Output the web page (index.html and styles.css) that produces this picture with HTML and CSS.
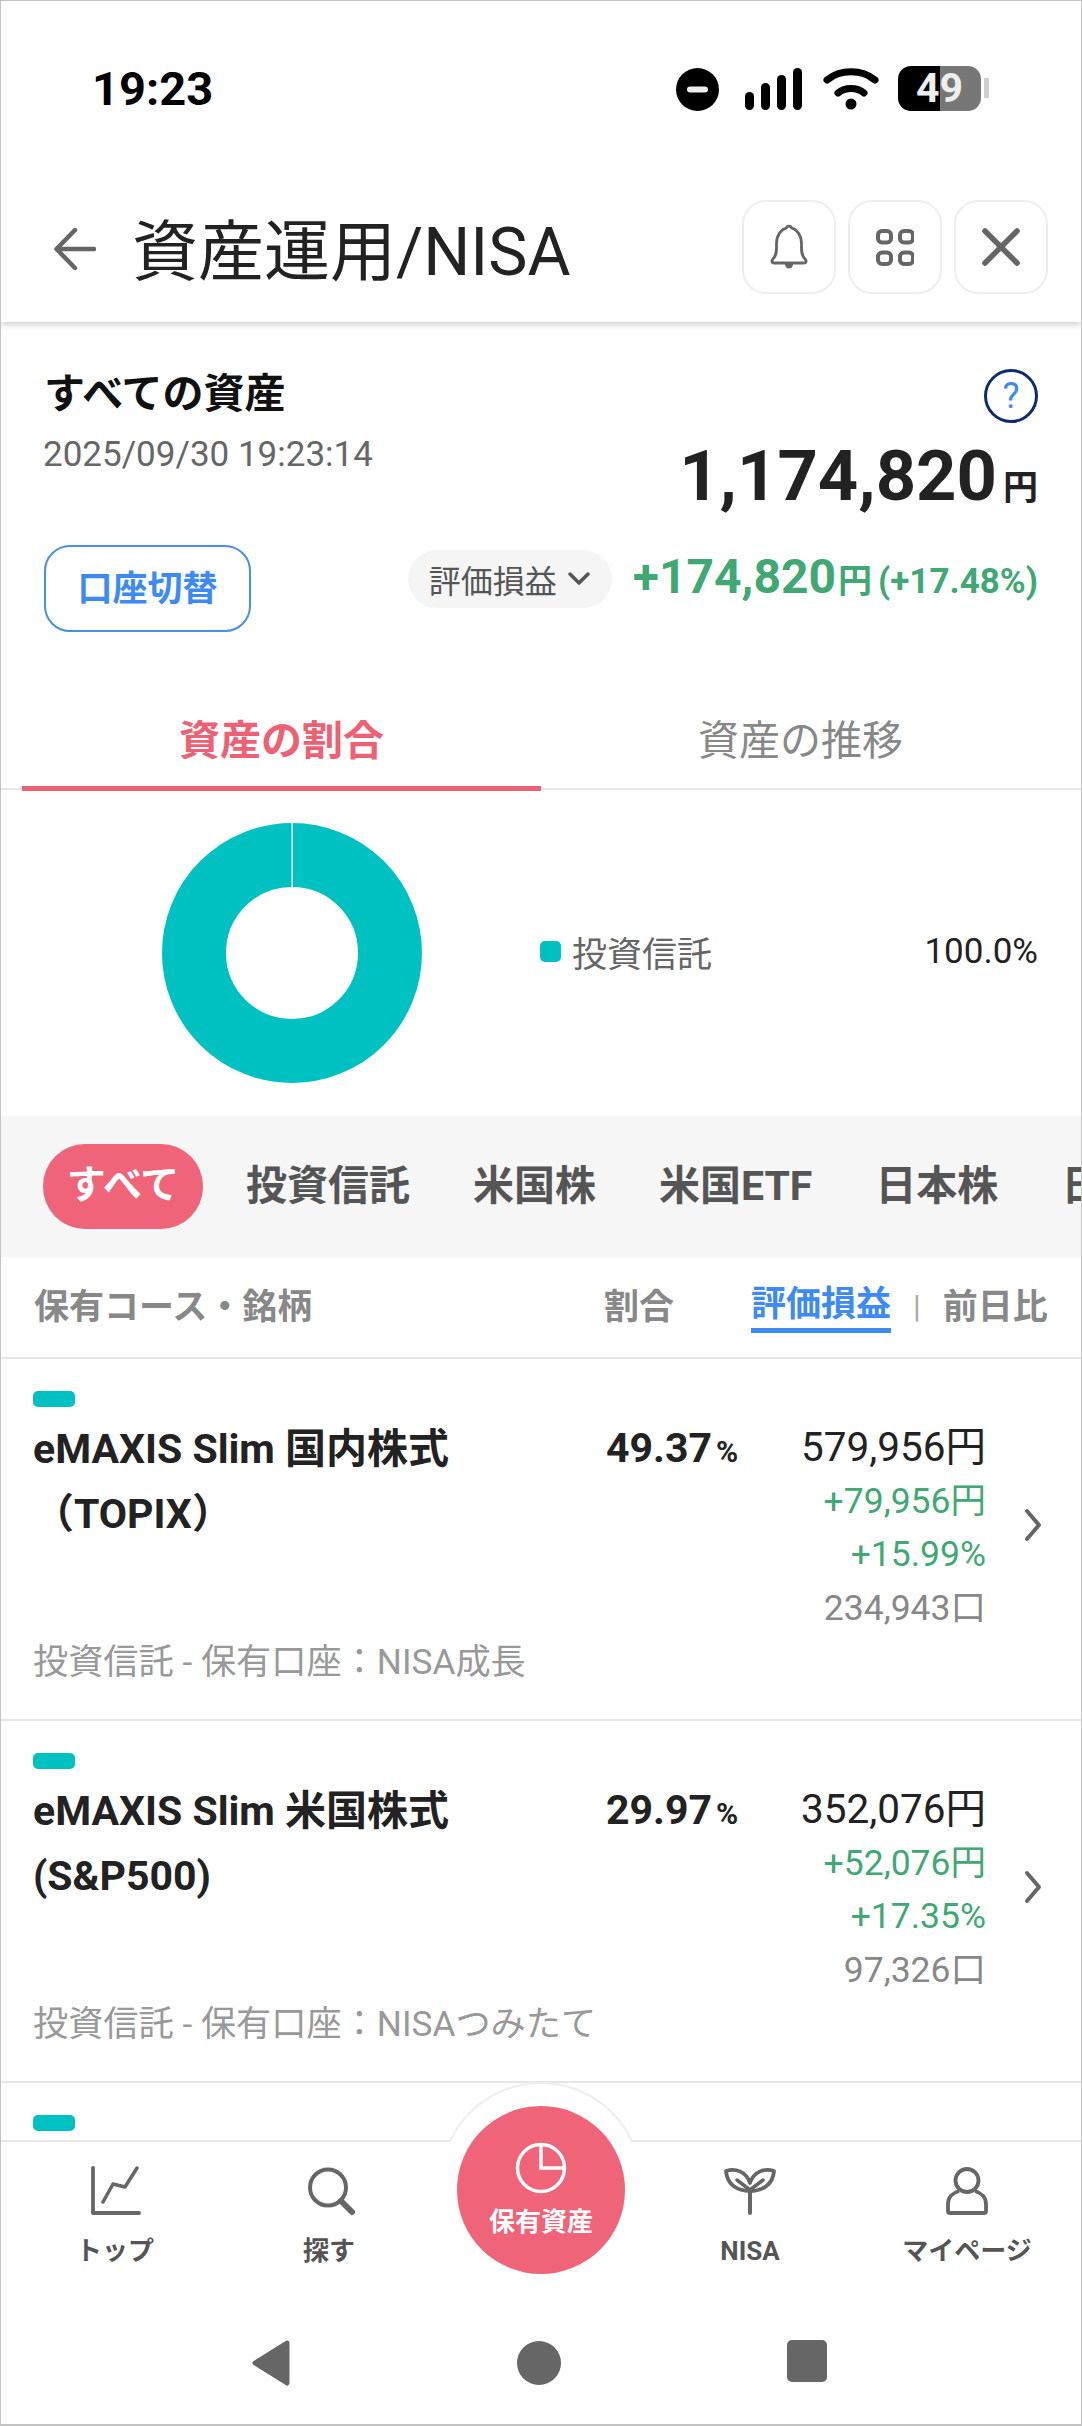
FILE: index.html
```html
<!DOCTYPE html>
<html lang="ja">
<head>
    <meta charset="UTF-8">
    <meta name="viewport" content="width=device-width, initial-scale=1.0">
    <title>資産運用/NISA</title>
    <link rel="stylesheet" href="styles.css">
</head>
<body>
    <div class="phone">
        <div class="status-bar">
            <span class="clock">19:23</span>
            <div class="status-icons">
                <svg class="dnd" width="43" height="43" viewBox="0 0 43 43"><circle cx="21.5" cy="21.5" r="21.5" fill="#000"/><rect x="11" y="18.5" width="21" height="6" rx="3" fill="#eee"/></svg>
                <svg class="signal" width="58" height="42" viewBox="0 0 58 42"><rect x="0" y="24" width="9" height="18" rx="4.5"/><rect x="16" y="15" width="9" height="27" rx="4.5"/><rect x="32" y="7" width="9" height="35" rx="4.5"/><rect x="48" y="0" width="9" height="42" rx="4.5"/></svg>
                <svg class="wifi" width="56" height="42" viewBox="0 0 56 42"><path d="M4 12C17 1 39 1 52 12M15 25C22 19 34 19 41 25" fill="none" stroke="#000" stroke-width="7" stroke-linecap="round"/><circle cx="28" cy="36" r="5.500"/></svg>
                <div class="battery"><span>49</span></div>
                <div class="battery-nub"></div>
            </div>
        </div>

        <header class="app-header">
            <svg class="back" width="42" height="42" viewBox="0 0 42 42"><path d="M40 21H3M21 2L2.5 21L21 40" fill="none" stroke="#666" stroke-width="4.5" stroke-linecap="round" stroke-linejoin="round"/></svg>
            <h1>資産運用/NISA</h1>
            <div class="header-buttons">
                <div class="icon-button">
                    <svg width="40" height="46" viewBox="0 0 40 46"><path d="M4 35C8 31 7.500 26 7.500 20C7.500 11 12 5.500 17.500 4C18 1.500 22 1.500 22.500 4C28 5.500 32.500 11 32.500 20C32.500 26 32 31 36 35C38 37 37 39 35 39H5C3 39 2 37 4 35Z" fill="none" stroke="#666" stroke-width="2.800" stroke-linejoin="round"/><path d="M16 40H24C24 46 16 46 16 40Z" fill="#666"/></svg>
                </div>
                <div class="icon-button">
                    <svg width="38" height="37" viewBox="0 0 38 37"><g fill="none" stroke="#666" stroke-width="4"><rect x="2" y="2" width="13" height="11.500" rx="4"/><rect x="24" y="2" width="13" height="11.500" rx="4"/><rect x="2" y="23.500" width="13" height="11.500" rx="4"/><rect x="24" y="23.500" width="13" height="11.500" rx="4"/></g></svg>
                </div>
                <div class="icon-button">
                    <svg width="38" height="38" viewBox="0 0 38 38"><path d="M3 3L35 35M35 3L3 35" stroke="#666" stroke-width="5.500" stroke-linecap="round"/></svg>
                </div>
            </div>
        </header>

        <main class="content">
            <section class="summary">
                <div class="summary-top">
                    <div>
                        <div class="summary-title">すべての資産</div>
                        <div class="summary-date">2025/09/30 19:23:14</div>
                    </div>
                    <div class="summary-right">
                        <div class="help">?</div>
                        <div class="total">1,174,820<span>円</span></div>
                    </div>
                </div>
                <div class="summary-bottom">
                    <button class="switch">口座切替</button>
                    <div class="gain-box">
                        <div class="gain-select">評価損益
                            <svg width="24" height="15" viewBox="0 0 24 15"><path d="M3 3L12 12L21 3" fill="none" stroke="#555" stroke-width="3.500" stroke-linecap="round" stroke-linejoin="round"/></svg>
                        </div>
                        <div class="gain">+174,820<span class="yen">円</span><span class="rate">(+17.48%)</span></div>
                    </div>
                </div>
            </section>

            <nav class="tabs">
                <div class="tab active">資産の割合</div>
                <div class="tab">資産の推移</div>
            </nav>

            <section class="chart">
                <svg class="donut" width="260" height="260" viewBox="0 0 260 260"><circle cx="130" cy="130" r="98" fill="none" stroke="#00c1c1" stroke-width="64"/><rect x="129.500" y="0" width="1.500" height="64" fill="#fff"/></svg>
                <div class="legend">
                    <span class="legend-mark"></span>
                    <span class="legend-name">投資信託</span>
                    <span class="legend-value">100.0%</span>
                </div>
            </section>

            <div class="filters">
                <span class="pill">すべて</span>
                <span class="filter">投資信託</span>
                <span class="filter">米国株</span>
                <span class="filter">米国ETF</span>
                <span class="filter">日本株</span>
                <span class="filter">日本ETF</span>
            </div>

            <div class="list-head">
                <span class="head-name">保有コース・銘柄</span>
                <span class="head-rate">割合</span>
                <span class="head-gain">評価損益</span>
                <span class="head-sep">|</span>
                <span class="head-day">前日比</span>
            </div>

            <div class="row">
                <div class="tag"></div>
                <div class="row-main">
                    <div class="fund">eMAXIS Slim 国内株式<br>（TOPIX）</div>
                    <div class="share">49.37<span>%</span></div>
                    <div class="amounts">
                        <div class="amount">579,956円</div>
                        <div class="up">+79,956円</div>
                        <div class="up">+15.99%</div>
                        <div class="units">234,943口</div>
                    </div>
                </div>
                <div class="account">投資信託 - 保有口座：NISA成長</div>
                <svg class="chevron" width="20" height="34" viewBox="0 0 20 34"><path d="M4 3L16 17L4 31" fill="none" stroke="#666" stroke-width="4" stroke-linecap="round" stroke-linejoin="round"/></svg>
            </div>

            <div class="row">
                <div class="tag"></div>
                <div class="row-main">
                    <div class="fund">eMAXIS Slim 米国株式<br>(S&amp;P500)</div>
                    <div class="share">29.97<span>%</span></div>
                    <div class="amounts">
                        <div class="amount">352,076円</div>
                        <div class="up">+52,076円</div>
                        <div class="up">+17.35%</div>
                        <div class="units">97,326口</div>
                    </div>
                </div>
                <div class="account">投資信託 - 保有口座：NISAつみたて</div>
                <svg class="chevron" width="20" height="34" viewBox="0 0 20 34"><path d="M4 3L16 17L4 31" fill="none" stroke="#666" stroke-width="4" stroke-linecap="round" stroke-linejoin="round"/></svg>
            </div>

            <div class="row">
                <div class="tag"></div>
            </div>
        </main>

        <footer class="tabbar">
            <div class="tabbar-arc"></div>
            <div class="tabbar-item item-top">
                <svg width="52" height="50" viewBox="0 0 52 50"><path d="M4 2V47H50" fill="none" stroke="#666" stroke-width="3.800" stroke-linecap="round" stroke-linejoin="round"/><path d="M14 36L24 18L36 21L48 2" fill="none" stroke="#666" stroke-width="3.500" stroke-linecap="round" stroke-linejoin="round"/></svg>
                <span>トップ</span>
            </div>
            <div class="tabbar-item item-search">
                <svg width="52" height="50" viewBox="0 0 52 50"><circle cx="25" cy="21.500" r="18" fill="none" stroke="#666" stroke-width="4"/><path d="M38 35L49 46" stroke="#666" stroke-width="6" stroke-linecap="round"/></svg>
                <span>探す</span>
            </div>
            <div class="tabbar-item item-nisa">
                <svg width="54" height="50" viewBox="0 0 54 50"><path d="M27 25V47" stroke="#666" stroke-width="4" stroke-linecap="round"/><path d="M27 25C15 25 4 19 3 5C12 2 23 5 27 17C31 5 42 2 51 5C50 19 39 25 27 25Z" fill="none" stroke="#666" stroke-width="3.800" stroke-linejoin="round"/><path d="M14 14L27 24L40 14" fill="none" stroke="#666" stroke-width="3.500" stroke-linecap="round" stroke-linejoin="round"/></svg>
                <span>NISA</span>
            </div>
            <div class="tabbar-item item-mypage">
                <svg width="46" height="50" viewBox="0 0 46 50"><circle cx="23" cy="14.500" r="11.500" fill="none" stroke="#666" stroke-width="3.800"/><path d="M15 25C8 27 4 32 4 38V45Q4 47 6 47H40Q42 47 42 45V38C42 32 38 27 31 25" fill="none" stroke="#666" stroke-width="3.800" stroke-linejoin="round"/></svg>
                <span>マイページ</span>
            </div>
            <div class="tabbar-main">
                <svg width="52" height="52" viewBox="0 0 52 52"><circle cx="26" cy="26" r="23.500" fill="none" stroke="#fff" stroke-width="3.500"/><path d="M26 2.500V26H49.500" fill="none" stroke="#fff" stroke-width="3.500"/></svg>
                <span>保有資産</span>
            </div>
        </footer>

        <div class="android-nav">
            <svg width="40" height="46" viewBox="0 0 40 46"><path d="M36 3L4 23L36 43Z" fill="#666" stroke="#666" stroke-width="5" stroke-linejoin="round"/></svg>
            <svg width="44" height="46" viewBox="0 0 44 46"><circle cx="22" cy="23" r="22" fill="#666"/></svg>
            <svg width="40" height="42" viewBox="0 0 40 42"><rect width="40" height="42" rx="5" fill="#666"/></svg>
        </div>
    </div>
</body>
</html>
```

FILE: styles.css
```css
* {
    box-sizing: border-box;
}
body {
    margin: 0;
    font-family: Roboto, "Noto Sans CJK JP", sans-serif;
    background-color: #fff;
    color: #222;
}
.phone {
    width: 1082px;
    height: 2426px;
    border: 1px solid #c4c4c4;
    border-bottom-width: 2px;
    display: flex;
    flex-direction: column;
    overflow: hidden;
    background: #fff;
}

/* status bar */
.status-bar {
    height: 199px;
    padding: 65px 92px 0 91px;
    display: flex;
    justify-content: space-between;
    align-items: flex-start;
}
.clock {
    font-size: 47px;
    font-weight: 700;
    line-height: 46px;
    color: #000;
}
.status-icons {
    display: flex;
    align-items: flex-start;
}
.dnd { margin-top: 2px; margin-right: 26px; }
.signal { margin-top: 2px; margin-right: 20px; }
.wifi { margin-top: 2px; margin-right: 19px; }
.battery {
    width: 83px;
    height: 45px;
    border-radius: 13px;
    background: linear-gradient(90deg, #000 0, #000 42px, #777 42px);
    color: #eee;
    font-size: 41px;
    font-weight: 700;
    line-height: 45px;
    text-align: center;
}
.battery-nub {
    width: 5px;
    height: 20px;
    margin: 12px 0 0 3px;
    background: #d0d0d0;
}

/* header */
.app-header {
    height: 122px;
    display: flex;
    align-items: flex-start;
    padding: 0 33px 0 53px;
    box-shadow: 0 3px 6px rgba(0, 0, 0, 0.18);
    clip-path: inset(0 0 -12px 0);
    position: relative;
}
.back { margin-top: 28px; }
.app-header h1 {
    margin: 0 0 0 36px;
    font-size: 66px;
    font-weight: 400;
    line-height: 106px;
    color: #222;
    flex: 1;
}
.header-buttons {
    display: flex;
    gap: 12px;
}
.icon-button {
    width: 94px;
    height: 94px;
    border: 2px solid #eee;
    border-radius: 24px;
    display: flex;
    align-items: center;
    justify-content: center;
}

/* main scrolling area */
.content {
    flex: 1;
    overflow: hidden;
}
.summary {
    padding: 0 43px;
    height: 404px;
}
.summary-top {
    display: flex;
    justify-content: space-between;
    height: 223px;
}
.summary-title {
    margin-top: 42px;
    font-size: 41px;
    font-weight: 700;
    line-height: 60px;
    color: #111;
}
.summary-date {
    margin-top: 11px;
    margin-left: -1px;
    font-size: 35px;
    line-height: 40px;
    color: #666;
}
.summary-right {
    text-align: right;
}
.help {
    width: 54px;
    height: 54px;
    margin: 47px 0 0 auto;
    border: 3px solid #0d2c6e;
    border-radius: 50%;
    color: #3d8bf2;
    font-size: 36px;
    line-height: 48px;
    text-align: center;
}
.total {
    margin-top: 11px;
    font-size: 70.500px;
    font-weight: 700;
    line-height: 84px;
    color: #222;
}
.total span {
    font-size: 35px;
    margin-left: 6px;
}
.summary-bottom {
    display: flex;
    justify-content: space-between;
    align-items: flex-start;
}
.switch {
    width: 207px;
    height: 87px;
    border: 2px solid #4a90e2;
    border-radius: 26px;
    background: #fff;
    color: #3d8bf2;
    font-family: inherit;
    font-size: 35px;
    font-weight: 700;
    padding: 0 0 6px;
}
.gain-box {
    display: flex;
    align-items: center;
    margin-top: 1px;
}
.gain-select {
    width: 204px;
    height: 58px;
    border-radius: 29px;
    background: #f5f5f5;
    color: #555;
    font-size: 32px;
    display: flex;
    align-items: center;
    justify-content: center;
    gap: 10px;
}
.gain {
    margin-left: 21px;
    padding-top: 2px;
    color: #3fa874;
    font-size: 48px;
    font-weight: 700;
    line-height: 58px;
}
.gain .yen {
    font-size: 34px;
    margin-left: 2px;
}
.gain .rate {
    font-size: 35px;
    margin-left: 6px;
}

/* tabs */
.tabs {
    display: flex;
    padding-left: 21px;
    border-bottom: 2px solid #e6e6e6;
    height: 79px;
    margin-top: -15px;
}
.tab {
    width: 519px;
    text-align: center;
    font-size: 41px;
    line-height: 60px;
    color: #888;
}
.tab.active {
    color: #ee6073;
    font-weight: 700;
    border-bottom: 5px solid #ee6073;
    height: 80px;
}

.chart {
    height: 326px;
    display: flex;
    align-items: center;
    padding: 0 43px 0 161px;
}
.legend {
    flex: 1;
    display: flex;
    align-items: center;
    margin-left: 118px;
    padding-bottom: 4px;
}
.legend-mark {
    width: 21px;
    height: 21px;
    border-radius: 5px;
    background: #00c1c1;
}
.legend-name {
    margin-left: 11px;
    font-size: 35px;
    color: #666;
    flex: 1;
}
.legend-value {
    font-size: 35px;
    color: #222;
}

/* category filter */
.filters {
    height: 141px;
    background: #f6f6f6;
    padding: 0 0 10px 42px;
    display: flex;
    align-items: center;
    white-space: nowrap;
}
.pill {
    width: 160px;
    height: 85px;
    flex-shrink: 0;
    margin-right: 43px;
    margin-top: 10px;
    border-radius: 42px;
    background: #ef6478;
    color: #fff;
    font-size: 39px;
    font-weight: 700;
    line-height: 82px;
    text-align: center;
}
.filter {
    margin-right: 63px;
    font-size: 41px;
    font-weight: 700;
    color: #555;
    flex-shrink: 0;
}

.list-head {
    height: 102px;
    border-bottom: 2px solid #e6e6e6;
    display: flex;
    align-items: center;
    padding: 0 0 8px 33px;
    font-size: 35px;
    font-weight: 700;
    color: #888;
    white-space: nowrap;
}
.head-name { width: 570px; }
.head-rate { width: 147px; }
.head-gain {
    color: #3d8bf2;
    border-bottom: 5px solid #3d8bf2;
    line-height: 46px;
    margin-top: 8px;
}
.head-sep {
    margin: 6px 22px 0;
    font-weight: 400;
    font-size: 32px;
    color: #aaa;
}

/* fund rows */
.row {
    height: 362px;
    padding: 32px 0 0 32px;
    border-bottom: 2px solid #e6e6e6;
    position: relative;
}
.tag {
    width: 42px;
    height: 16px;
    border-radius: 5px;
    background: #00c1c1;
}
.row-main {
    display: flex;
    align-items: flex-start;
    margin-top: 9px;
    height: 194px;
}
.fund {
    width: 573px;
    font-size: 41px;
    font-weight: 700;
    line-height: 65px;
    color: #222;
    padding-top: 1px;
}
.share {
    width: 151px;
    font-size: 41px;
    font-weight: 700;
    line-height: 65px;
    white-space: nowrap;
}
.share span {
    font-size: 30px;
    margin-left: 4px;
}
.amounts {
    width: 229px;
    text-align: right;
    font-size: 35.500px;
    line-height: 53.500px;
    padding-top: 5px;
    white-space: nowrap;
}
.amount {
    font-size: 40.500px;
    color: #222;
}
.up { color: #3fa874; }
.units { color: #888; }
.account {
    font-size: 35.200px;
    line-height: 52px;
    color: #999;
    margin-top: 26px;
}
.chevron {
    position: absolute;
    right: 38px;
    top: 149px;
}

/* bottom tab bar */
.tabbar {
    height: 181px;
    flex-shrink: 0;
    border-top: 2px solid #e8e8e8;
    background: #fff;
    display: flex;
    padding-top: 24px;
    position: relative;
}
.tabbar-item {
    display: flex;
    flex-direction: column;
    align-items: center;
    width: 200px;
    font-size: 26px;
    font-weight: 700;
    color: #555;
    line-height: 36px;
    gap: 17px;
}
.item-top { width: 228px; }
.item-nisa { margin-left: 221px; }
.item-mypage { margin-left: 17px; }
.tabbar-arc {
    position: absolute;
    left: 439px;
    top: -60px;
    width: 202px;
    height: 202px;
    border: 2px solid #eee;
    border-radius: 50%;
    background: #fff;
    clip-path: inset(0 0 142px 0);
}
.tabbar-main {
    position: absolute;
    left: 456px;
    top: -36px;
    width: 168px;
    height: 168px;
    border-radius: 50%;
    background: #ef6478;
    color: #fff;
    font-size: 26px;
    font-weight: 700;
    display: flex;
    flex-direction: column;
    align-items: center;
    padding-top: 36px;
    line-height: 36px;
    gap: 10px;
}

/* android navigation */
.android-nav {
    flex-shrink: 0;
    height: 103px;
    background: #fff;
    display: flex;
    align-items: flex-start;
    padding: 19px 0 0 250px;
    gap: 226px;
}
```
